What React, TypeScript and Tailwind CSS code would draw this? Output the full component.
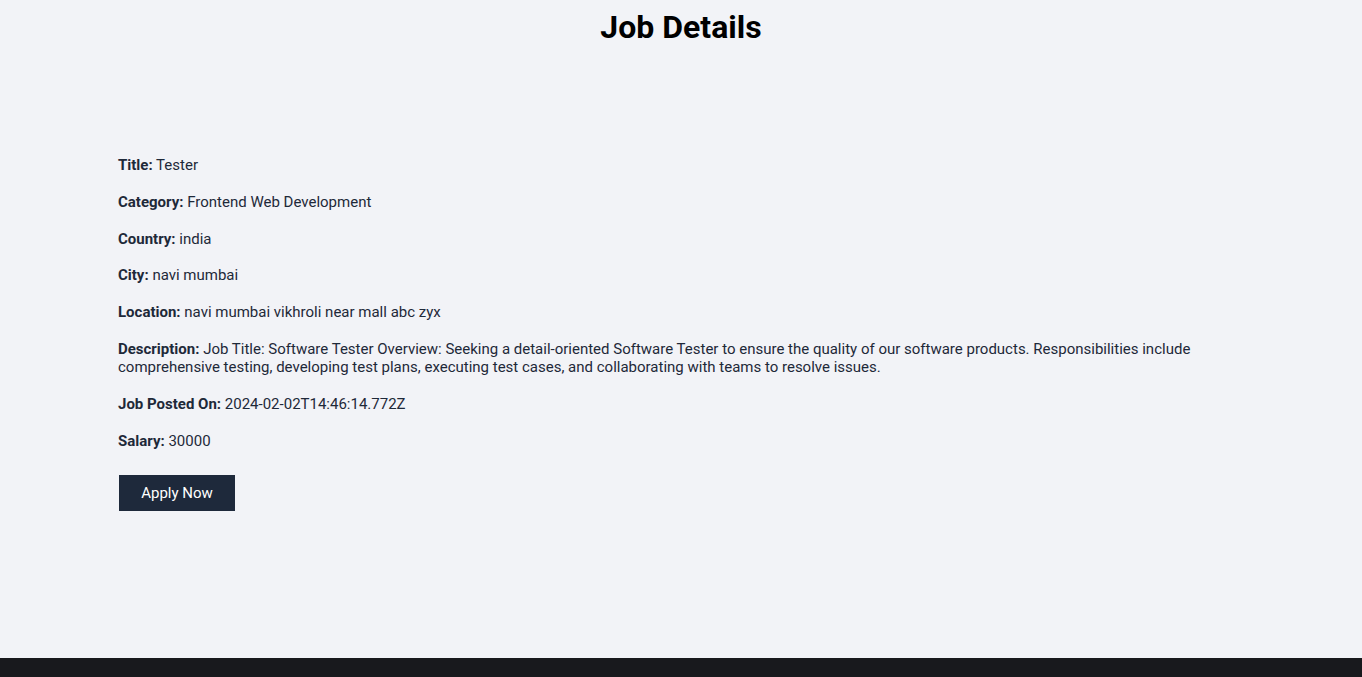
import React from "react";

const job = [
    { label: "Title", value: "Tester" },
    { label: "Category", value: "Frontend Web Development" },
    { label: "Country", value: "india" },
    { label: "City", value: "navi mumbai" },
    { label: "Location", value: "navi mumbai vikhroli near mall abc zyx" },
    {
        label: "Description",
        value: "Job Title: Software Tester Overview: Seeking a detail-oriented Software Tester to ensure the quality of our software products. Responsibilities include comprehensive testing, developing test plans, executing test cases, and collaborating with teams to resolve issues.",
    },
    { label: "Job Posted On", value: "2024-02-02T14:46:14.772Z" },
    { label: "Salary", value: "30000" },
];

export default function App() {
    return (
        <div className="bg-[#f2f3f7] font-['Roboto',sans-serif]">
            <main className="min-h-[658px]">
                <h1 className="pt-[6px] text-center text-[32px] font-bold leading-[42px] text-black">
                    Job Details
                </h1>
                <section className="mx-[118px] mt-[108px] text-[15px] leading-[18.25px] text-[#1e2939]">
                    {job.map(item => (
                        <p key={item.label} className="mb-[18.5px]">
                            <strong className="font-bold">{item.label}:</strong>{" "}
                            {item.value}
                        </p>
                    ))}
                    <button className="mt-[7px] ml-px h-9 w-[116px] bg-[#1e293b] text-[15px] text-white">
                        Apply Now
                    </button>
                </section>
            </main>
            <footer className="h-[19px] bg-[#18191d]" />
        </div>
    );
}
